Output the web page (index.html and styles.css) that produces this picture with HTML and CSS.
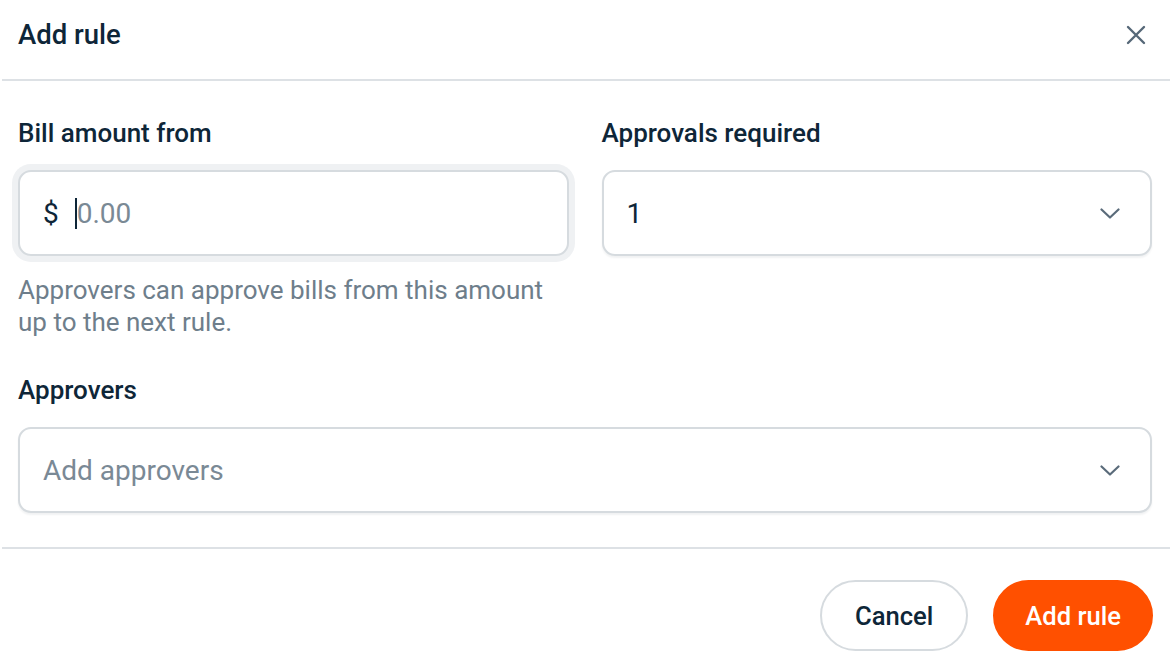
FILE: index.html
```html
<!DOCTYPE html>
<html>
    <head>
        <meta charset="UTF-8">
        <title>Add rule</title>
        <link rel="stylesheet" href="styles.css">
    </head>
    <body>
        <div class="dialog">
            <div class="header">
                <span class="title">Add rule</span>
                <a class="close">
                    <svg width="20" height="20" viewBox="0 0 20 20"><path d="M2 2 L18 18 M18 2 L2 18" stroke="#566878" stroke-width="2.4" stroke-linecap="round"/></svg>
                </a>
            </div>
            <div class="line"></div>
            <div class="body">
                <div class="row">
                    <div class="field">
                        <div class="label">Bill amount from</div>
                        <div class="box focus">
                            <span class="prefix">$</span><span class="caret"></span><span class="holder">0.00</span>
                        </div>
                        <div class="help">Approvers can approve bills from this amount up to the next rule.</div>
                    </div>
                    <div class="field">
                        <div class="label">Approvals required</div>
                        <div class="box select">
                            <span class="value">1</span>
                            <svg class="chev" width="20" height="11" viewBox="0 0 20 11"><path d="M1.5 1.5 L10 9.5 L18.5 1.5" fill="none" stroke="#5a6b7a" stroke-width="2.2" stroke-linecap="round" stroke-linejoin="round"/></svg>
                        </div>
                    </div>
                </div>
                <div class="label approvers">Approvers</div>
                <div class="box select">
                    <span class="holder">Add approvers</span>
                    <svg class="chev" width="20" height="11" viewBox="0 0 20 11"><path d="M1.5 1.5 L10 9.5 L18.5 1.5" fill="none" stroke="#5a6b7a" stroke-width="2.2" stroke-linecap="round" stroke-linejoin="round"/></svg>
                </div>
            </div>
            <div class="line"></div>
            <div class="footer">
                <a class="btn cancel">Cancel</a>
                <a class="btn primary">Add rule</a>
            </div>
        </div>
    </body>
</html>
```

FILE: styles.css
```css
html{
    background-color: white;
}
body{
    margin: 0;
    font-family: Roboto, "Liberation Sans", sans-serif;
    color: #0e2638;
}
.dialog{
    width: 1172px;
}
.header{
    display: flex;
    justify-content: space-between;
    align-items: center;
    height: 79px;
    padding: 0 26px 0 18px;
    box-sizing: border-box;
}
.title{
    font-size: 27.5px;
    font-weight: 500;
    line-height: 36px;
    margin-top: -10px;
}
.close{
    display: flex;
    margin-top: -10px;
}
.line{
    height: 2px;
    margin: 0 2px;
    background-color: #dde1e5;
}
.body{
    padding: 36px 20px 34px 18px;
}
.row{
    display: grid;
    grid-template-columns: 1fr 1fr;
    column-gap: 33px;
}
.label{
    font-size: 26px;
    font-weight: 500;
    line-height: 32px;
    margin-bottom: 21px;
}
.approvers{
    margin-top: 36px;
}
.box{
    display: flex;
    align-items: center;
    height: 86px;
    box-sizing: border-box;
    border: 2px solid #d6dbdf;
    border-radius: 13px;
    padding: 0 30px 0 23px;
    font-size: 28px;
    background-color: white;
    box-shadow: 0 2px 2px rgba(16, 38, 56, 0.06);
}
.focus{
    box-shadow: 0 0 0 6px #eff1f3, 0 2px 2px rgba(16, 38, 56, 0.06);
}
.prefix{
    margin-right: 16px;
}
.caret{
    width: 2px;
    height: 31px;
    background-color: #0e2638;
}
.holder{
    color: #7a8995;
}
.select{
    justify-content: space-between;
}
.chev{
    display: block;
}
.help{
    margin-top: 18px;
    font-size: 26px;
    line-height: 32px;
    color: #6e7e8b;
}
.footer{
    display: flex;
    justify-content: flex-end;
    gap: 25px;
    padding: 31px 19px 0 0;
}
.btn{
    display: flex;
    align-items: center;
    height: 71px;
    box-sizing: border-box;
    padding: 0 33px;
    border-radius: 36px;
    font-size: 25.6px;
    font-weight: 500;
    border: 2px solid #d6dbdf;
}
.cancel{
    color: #0e2638;
    background-color: white;
}
.primary{
    padding: 0 30px;
    color: white;
    background-color: #ff5000;
    border-color: #ff5000;
}
```
